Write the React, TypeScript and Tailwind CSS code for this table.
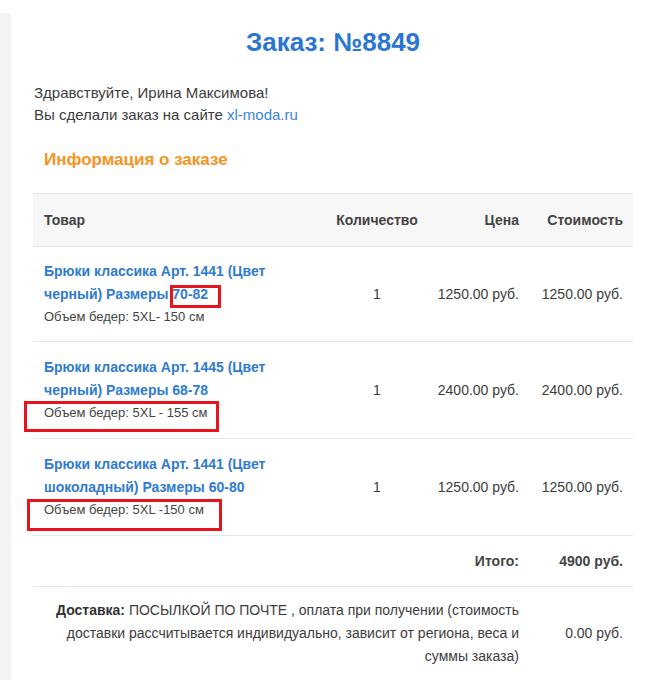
import React from 'react';

type Item = {
  name: React.ReactNode;
  hips: React.ReactNode;
  qty: number;
  price: string;
  total: string;
};

// red annotation frame laid over a piece of text
function Mark({ className }: { className: string }) {
  return <span className={`pointer-events-none absolute border-[3px] border-[#e8141b] ${className}`} />;
}

const items: Item[] = [
  {
    name: (
      <>
        Брюки классика Арт. 1441 (Цвет черный) Размеры{' '}
        <span className="relative">
          70-82
          <Mark className="-left-[2px] -top-[1px] h-[23px] w-[51px]" />
        </span>
      </>
    ),
    hips: 'Объем бедер: 5XL- 150 см',
    qty: 1,
    price: '1250.00 руб.',
    total: '1250.00 руб.',
  },
  {
    name: 'Брюки классика Арт. 1445 (Цвет черный) Размеры 68-78',
    hips: (
      <span className="relative">
        Объем бедер: 5XL - 155 см
        <Mark className="-left-[20px] -top-[4px] h-[31px] w-[195px]" />
      </span>
    ),
    qty: 1,
    price: '2400.00 руб.',
    total: '2400.00 руб.',
  },
  {
    name: 'Брюки классика Арт. 1441 (Цвет шоколадный) Размеры 60-80',
    hips: (
      <span className="relative">
        Объем бедер: 5XL -150 см
        <Mark className="-left-[17px] -top-[3px] h-[32px] w-[195px]" />
      </span>
    ),
    qty: 1,
    price: '1250.00 руб.',
    total: '1250.00 руб.',
  },
];

export default function App() {
  return (
    <div className="min-h-[680px] bg-white font-['Liberation_Sans',Arial,sans-serif] text-[#3c3c3c]">
      <div className="h-[13px]" />
      <div className="flex min-h-[667px]">
        {/* left gutter */}
        <div className="w-[11px] shrink-0 bg-[#f3f3f3]" />

        <div className="w-[622px] pl-[22px]">
          {/* Title */}
          <h1 className="pt-[14px] text-center text-[26px] font-bold leading-[30px] text-[#2a76d2]">
            Заказ: №8849
          </h1>

          {/* Greeting */}
          <div className="mt-[25px] pl-[1px] text-[15px] leading-[22px]">
            <p>Здравствуйте, Ирина Максимова!</p>
            <p>
              Вы сделали заказ на сайте <span className="text-[#3a84dc]">xl-moda.ru</span>
            </p>
          </div>

          <h3 className="mt-[22px] pl-[11px] text-[17px] font-bold leading-[24px] text-[#f7931e]">
            Информация о заказе
          </h3>

          {/* Order table */}
          <table className="mt-[21px] w-[600px] table-fixed border-collapse text-[14px]">
            <colgroup>
              <col className="w-[293px]" />
              <col className="w-[102px]" />
              <col className="w-[101px]" />
              <col className="w-[104px]" />
            </colgroup>
            <thead>
              <tr className="h-[53px] border-y border-[#e6e6e6] bg-[#f7f7f7] font-bold text-[#444]">
                <th className="pl-[11px] text-left">Товар</th>
                <th className="text-center">Количество</th>
                <th className="pr-[10px] text-right">Цена</th>
                <th className="pr-[10px] text-right">Стоимость</th>
              </tr>
            </thead>
            <tbody>
              {items.map((it, i) => (
                <tr key={i} className="border-b border-[#e6e6e6]">
                  <td className={`${i === 0 ? 'py-[13px]' : 'py-[14px]'} pl-[11px] pr-[10px] align-middle`}>
                    <div className="max-w-[250px] font-bold leading-[23px] text-[#2f7bd0]">{it.name}</div>
                    <div className="text-[13px] leading-[22px] text-[#444]">{it.hips}</div>
                  </td>
                  <td className="text-center align-middle">{it.qty}</td>
                  <td className="pr-[10px] text-right align-middle">{it.price}</td>
                  <td className="pr-[10px] text-right align-middle">{it.total}</td>
                </tr>
              ))}
              <tr className="h-[51px] border-b border-[#e6e6e6] font-bold text-[#444]">
                <td colSpan={2} />
                <td className="pr-[10px] text-right align-middle">Итого:</td>
                <td className="pr-[10px] text-right align-middle">4900 руб.</td>
              </tr>
              <tr>
                <td colSpan={3} className="py-[12px] pl-[11px] pr-[10px] text-right align-middle leading-[23px]">
                  <b className="text-[#333]">Доставка:</b> ПОСЫЛКОЙ ПО ПОЧТЕ , оплата при получении (стоимость
                  доставки рассчитывается индивидуально, зависит от региона, веса и суммы заказа)
                </td>
                <td className="pr-[10px] text-right align-middle">0.00 руб.</td>
              </tr>
            </tbody>
          </table>
        </div>
      </div>
    </div>
  );
}
